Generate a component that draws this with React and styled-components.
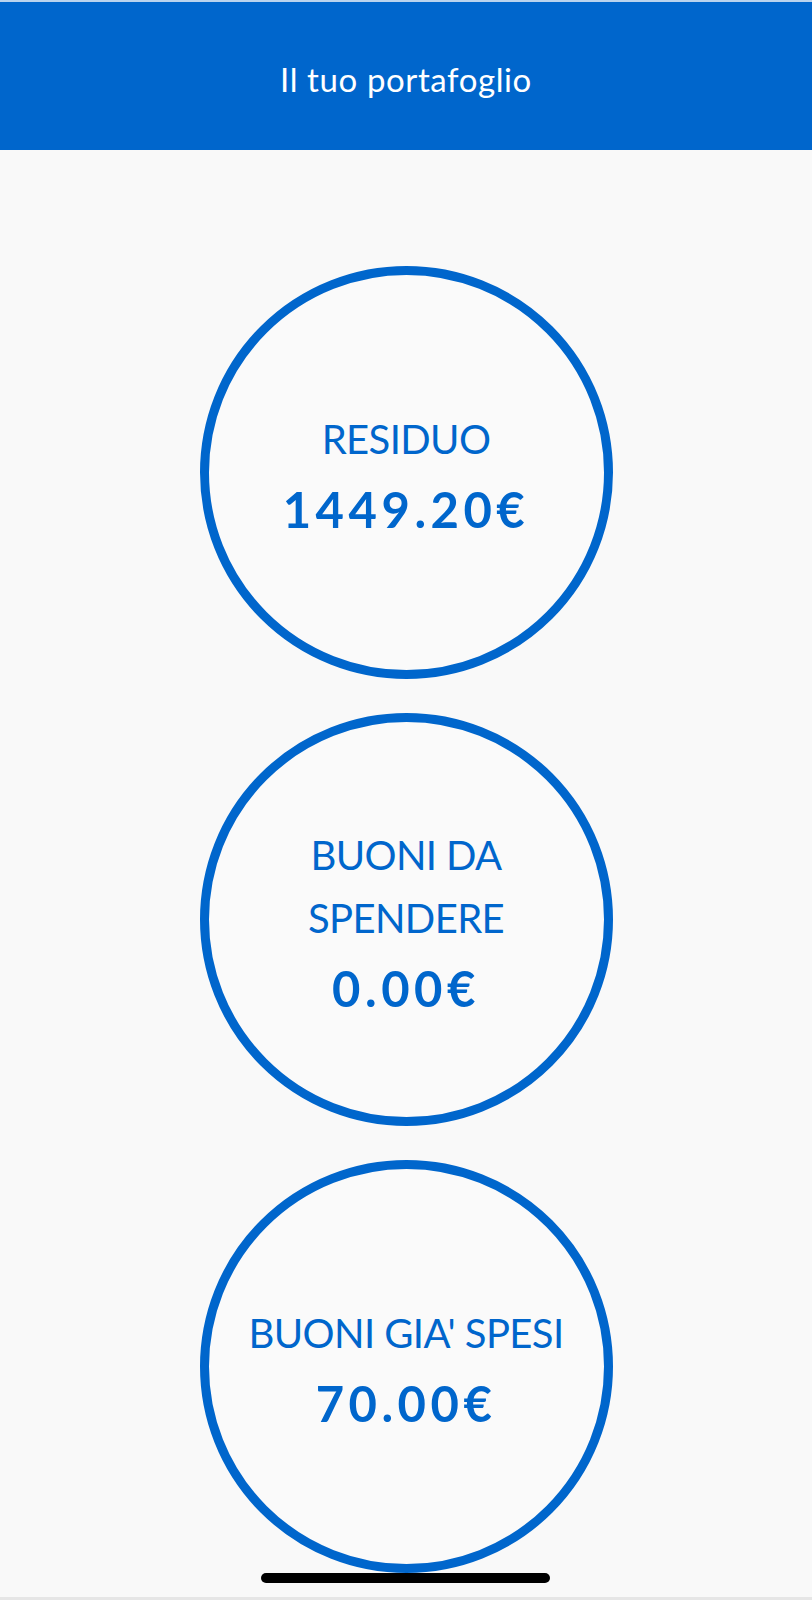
import styled, { createGlobalStyle } from "styled-components";

const GlobalStyle = createGlobalStyle`
  * {
    box-sizing: border-box;
  }

  body {
    margin: 0;
    background: #f9f9f9;
    font-family: "Lato", "Liberation Sans", sans-serif;
  }
`;

const wallet = [
  { label: ["RESIDUO"], value: "1449.20€" },
  { label: ["BUONI DA", "SPENDERE"], value: "0.00€" },
  { label: ["BUONI GIA' SPESI"], value: "70.00€" },
];

function App() {
  return (
    <>
      <GlobalStyle />
      <Page>
        <Header>
          <Title>Il tuo portafoglio</Title>
        </Header>
        <Main>
          {wallet.map((item) => (
            <Circle key={item.value}>
              <Label>
                {item.label.map((line) => (
                  <span key={line}>{line}</span>
                ))}
              </Label>
              <Value>{item.value}</Value>
            </Circle>
          ))}
        </Main>
      </Page>
      <HomeIndicator />
    </>
  );
}

export default App;

const Page = styled.div`
  display: flex;
  flex-direction: column;
  min-height: 1600px;
  border-bottom: 3px solid #e6e6e6;
  background: #f9f9f9;
`;

const Header = styled.header`
  display: flex;
  align-items: center;
  justify-content: center;
  height: 150px;
  border-top: 2px solid #b9d3ee;
  background: #0066cc;
`;

const Title = styled.h1`
  margin: 0;
  padding-top: 6px;
  color: #ffffff;
  font-size: 33px;
  font-weight: 400;
  letter-spacing: 0.6px;
`;

const Main = styled.main`
  flex: 1;
  display: flex;
  flex-direction: column;
  align-items: center;
  gap: 34px;
  padding-top: 116px;
`;

const Circle = styled.section`
  display: flex;
  flex-direction: column;
  align-items: center;
  justify-content: center;
  gap: 10px;
  width: 413px;
  height: 413px;
  border: 9px solid #0066cc;
  border-radius: 50%;
  background: #fafafa;
  color: #0066cc;
  text-align: center;
`;

const Label = styled.div`
  display: flex;
  flex-direction: column;
  font-size: 40px;
  line-height: 63px;
  font-weight: 400;
  letter-spacing: -0.6px;
`;

const Value = styled.div`
  font-size: 49px;
  line-height: 56px;
  font-weight: 700;
  letter-spacing: 4.5px;
`;

const HomeIndicator = styled.div`
  position: fixed;
  left: 50%;
  bottom: 17px;
  width: 289px;
  height: 10px;
  margin-left: -145px;
  border-radius: 5px;
  background: #000000;
`;
